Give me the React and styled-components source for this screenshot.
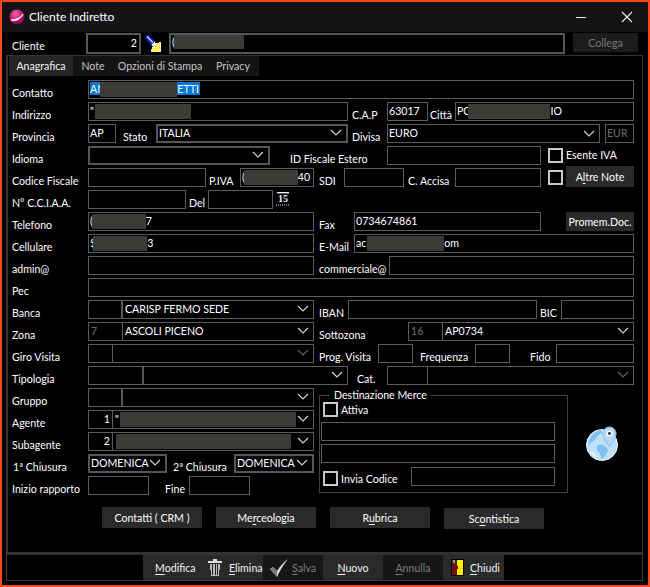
import React from 'react';
import styled, { createGlobalStyle } from 'styled-components';

const Global = createGlobalStyle`
  html, body { margin: 0; padding: 0; background: #000; }
  * { box-sizing: border-box; }
  u { text-underline-offset: 2px; }
`;

const Window = styled.div`
  width: 650px; height: 587px; background: #000; border: 2px solid #ff4a17;
  display: flex; flex-direction: column; overflow: hidden;
  font-family: "Lato", sans-serif; font-size: 10.6px; color: #fff;
`;
const TitleBar = styled.div`
  height: 30px; background: #141414; display: flex; align-items: center; padding: 0 15px 0 7px; flex: none;
`;
const Title = styled.div`font-size: 12px; margin-left: 4px; flex: 1; margin-bottom: 2px;`;
const WinControls = styled.div`display: flex; align-items: center; gap: 34px; margin-bottom: 1px;`;
const ClientBar = styled.div`
  height: 21px; margin-top: 1px; display: flex; flex: none; padding-left: 8px;
`;
const ClientLabel = styled.div`width: 76px; padding: 5px 0 0 2px; line-height: 16px;`;
const Collega = styled.div`
  width: 65px; height: 19px; margin-left: 8px; background: #1c1c1c; color: #7a7a7a;
  display: flex; align-items: center; justify-content: center;
`;
const IconSlot = styled.div`width: 28px; display: flex; padding-left: 3px; align-items: center;`;

const TabFrame = styled.div`
  margin: 1px 5px 0 4px; height: 500px; flex: none; border: 1px solid #333; border-bottom: 3px solid #333;
  border-left-width: 2px;
`;
const Tabs = styled.div`display: flex; height: 20px; margin: 0 0 0 1px;`;
const Tab = styled.div`
  height: 20px; width: ${p => p.$w}px; display: flex; align-items: center; justify-content: center;
  background: ${p => (p.$active ? '#262626' : '#141414')}; color: ${p => (p.$active ? '#f2f2f2' : '#c4c4c4')};
`;
const Form = styled.div`padding: 4px 0 0 4px; display: flex; flex-direction: column;`;
const Row = styled.div`display: flex; height: 19px; margin-bottom: 3px; flex: none;`;
const Label = styled.div`
  width: ${p => p.$w}px; padding-left: ${p => p.$pl || 0}px; padding-top: ${p => (p.$up ? 1 : 5)}px;
  line-height: 16px; white-space: nowrap; flex: none;
`;
const Gap = styled.div`width: ${p => p.$w}px; flex: none;`;
const Field = styled.div`
  width: ${p => p.$w}px; height: ${p => p.$h || 19}px; flex: none; display: flex; align-items: flex-start;
  border: ${p => (p.$thick ? 2 : 1)}px solid ${p => (p.$thick ? '#565656' : '#5c5c5c')};
  padding: ${p => (p.$thick ? 0 : 1)}px 0 0 1px;
  line-height: 14px; white-space: nowrap; overflow: hidden; color: ${p => p.$color || '#fff'};
`;
const NumberField = styled(Field)`justify-content: flex-end; padding-right: 2px; line-height: 16px;`;
const Value = styled.div`flex: 1; min-width: 0; display: flex; overflow: hidden; align-items: flex-start;`;
const Chevron = styled.svg`flex: none; margin: ${p => (p.$thick ? 3 : 4)}px 4px 0 0; width: 12px; height: 8px;`;
const Combo = styled.div`
  width: ${p => p.$w}px; height: 19px; flex: none; display: flex; border: 1px solid #5c5c5c;
  line-height: 14px; white-space: nowrap; overflow: hidden;
`;
const Code = styled.div`
  width: ${p => p.$w}px; flex: none; padding: 1px 2px; text-align: ${p => (p.$right ? 'right' : 'left')};
  border-right: ${p => (p.$thick ? 2 : 1)}px solid ${p => (p.$thick ? '#565656' : '#5c5c5c')};
  color: ${p => (p.$dim ? '#6e6e6e' : '#fff')};
`;
const ComboText = styled.div`flex: 1; min-width: 0; padding: 1px 0 0 2px; display: flex; overflow: hidden;`;
const Check = styled.div`
  width: 15px; height: 15px; flex: none; margin-top: ${p => p.$mt ?? 2}px; border: 2px solid #c8c8c8;
`;
const Redact = styled.span`
  display: block; flex: none; width: ${p => p.$w}px; height: ${p => p.$h || 15}px;
  margin-left: ${p => p.$ml || 0}px; margin-right: ${p => p.$mr || 0}px; background: #3b3b37;
`;
const Selected = styled.span`display: flex; background: #0078d7; color: #fff; height: 13px; overflow: visible; padding-right: 1px;`;
const SideButton = styled.div`
  width: 68px; height: ${p => p.$h || 19}px; margin-top: ${p => p.$mt || 0}px; flex: none; background: #2a2a2a;
  display: flex; align-items: center; justify-content: center; white-space: nowrap;
`;
const Lower = styled.div`display: flex;`;
const LeftCol = styled.div`width: 307px; flex: none; display: flex; flex-direction: column;`;
const Group = styled.fieldset`
  width: 249px; height: 105px; margin: 0; padding: 0 0 0 1px; border: 1px solid #444; flex: none;
  display: flex; flex-direction: column; min-width: 0;
`;
const Legend = styled.legend`margin-left: 9px; padding: 0 4px; line-height: 14px; height: 14px;`;
const GroupRow = styled.div`
  display: flex; margin-top: ${p => p.$mt || 0}px; padding-left: ${p => p.$pl || 0}px; height: ${p => p.$h || 19}px;
`;
const GroupCheckText = styled.span`
  margin-left: 3px; line-height: 16px; padding-top: ${p => p.$pt || 0}px; width: ${p => p.$w || 'auto'}${p => (p.$w ? 'px' : '')};
`;
const GlobeSlot = styled.div`margin: 38px 0 0 17px; flex: none;`;
const ActionRow = styled.div`display: flex; gap: 14px; padding-left: 90px; margin-top: 9px;`;
const Action = styled.div`
  width: 100px; height: 21px; background: #2a2a2a; display: flex; align-items: center; justify-content: center;
  margin-top: ${p => p.$mt || 0}px;
`;
const BottomBar = styled.div`
  margin: 0 5px 0 4px; height: 26px; flex: none; border: 1px solid #3a3a3a; border-top: none;
  display: flex; padding-left: 136px; padding-top: 0;
`;
const BarBtn = styled.div`
  width: ${p => p.$w}px; height: 25px; display: flex; align-items: center; gap: ${p => p.$gap || 0}px;
  justify-content: ${p => (p.$pl ? 'flex-start' : 'center')}; padding-left: ${p => p.$pl || 0}px;
  background: ${p => (p.$off ? '#161616' : '#2a2a2a')}; color: ${p => (p.$off ? '#7c7c7c' : '#f2f2f2')};
`;

const Chev = ({ thick, dim }) => (
  <Chevron $thick={thick} viewBox="0 0 12 8">
    <polyline points="1,1 6,6 11,1" fill="none" stroke={dim ? '#666' : '#d8d8d8'} strokeWidth="1.1" />
  </Chevron>
);

const Select = ({ w, thick, children }) => (
  <Field $w={w} $thick={thick}>
    <Value>{children}</Value>
    <Chev thick={thick} />
  </Field>
);

const Pick = ({ w, code, codeW, right, dimCode, dim, thick, children }) => (
  <Combo $w={w}>
    <Code $w={codeW} $right={right} $dim={dimCode} $thick={thick}>{code}</Code>
    <ComboText>{children}</ComboText>
    <Chev dim={dim} />
  </Combo>
);

const Logo = () => (
  <svg width="16" height="16" viewBox="0 0 16 16">
    <defs>
      <radialGradient id="ball" cx="0.4" cy="0.3" r="0.8">
        <stop offset="0" stopColor="#f06aa8" />
        <stop offset="0.55" stopColor="#c4126e" />
        <stop offset="1" stopColor="#5a0638" />
      </radialGradient>
    </defs>
    <circle cx="8" cy="8" r="7.5" fill="url(#ball)" />
    <path d="M2 11 C6 12.5 11 11 14 5 C12 9 7 10.5 2 11Z" fill="#fff" stroke="#fff" strokeWidth="0.8" />
  </svg>
);

const Minimize = () => (
  <svg width="12" height="12" viewBox="0 0 12 12">
    <line x1="1" y1="6.5" x2="11" y2="6.5" stroke="#eee" strokeWidth="1" />
  </svg>
);
const CloseIcon = () => (
  <svg width="12" height="12" viewBox="0 0 12 12">
    <path d="M1 1 L11 11 M11 1 L1 11" stroke="#eee" strokeWidth="1.1" />
  </svg>
);

const Sweep = () => (
  <svg width="18" height="18" viewBox="0 0 18 18" shapeRendering="crispEdges">
    <defs>
      <pattern id="dith" width="2" height="2" patternUnits="userSpaceOnUse">
        <rect width="2" height="2" fill="#ffef3a" />
        <rect width="1" height="1" fill="#fff" />
      </pattern>
    </defs>
    <path d="M7 17 L8 11 L12 8 L17 7 L17 17Z" fill="url(#dith)" />
    <path d="M1 2 L4 0 L12 8 L8 12Z" fill="#1c2ec0" />
    <path d="M2 2 L4 1 L9 7 L8 8Z" fill="#a9c8ff" />
    <path d="M7 10 L10 7 L12 9 L9 12Z" fill="#efefef" />
  </svg>
);

const CalNum = styled.text`font-family: "Liberation Serif", serif; font-size: 10px; font-weight: bold;`;
const Calendar = () => (
  <svg width="14" height="16" viewBox="0 0 14 16">
    <rect x="1" y="2" width="12" height="1.4" fill="#eee" />
    <CalNum x="2" y="12" fill="#eee">15</CalNum>
    <line x1="0" y1="15" x2="13" y2="15" stroke="#ddd" strokeDasharray="1 1" />
  </svg>
);

const Globe = () => (
  <svg width="34" height="36" viewBox="0 0 34 36">
    <circle cx="17" cy="19" r="15.5" fill="#bfe0fb" stroke="#eaf5ff" strokeWidth="1" />
    <path d="M3 20 C4 10 10 5 16 4 C20 8 12 8 11 12 C9 16 5 16 3 20Z" fill="#7fbff2" />
    <path d="M12 20 C16 17 21 20 23 24 C22 28 19 31 17 33 C15 30 16 26 12 25Z" fill="#7fbff2" />
    <path d="M5 26 C8 24 9 28 12 31 C9 31 6 29 5 26Z" fill="#e6f4ff" />
    <path d="M24.5 1 C20.5 1 18 4.5 18 8 C18 12 22 17 24.5 21 C27 17 31 12 31 8 C31 4.5 28.5 1 24.5 1Z" fill="#b4daf8" stroke="#86bcec" strokeWidth="1" />
    <circle cx="24.5" cy="7.5" r="3" fill="#fff" />
    <circle cx="24.5" cy="7.5" r="1.4" fill="#123" />
  </svg>
);

const Trash = () => (
  <svg width="14" height="17" viewBox="0 0 14 17" shapeRendering="crispEdges">
    <rect x="5" y="0" width="4" height="1.5" fill="#ddd" />
    <rect x="0" y="2" width="14" height="2" fill="#e0e0e0" />
    <path d="M2 5 H12 L11 17 H3Z" fill="#bbb" />
    <path d="M4.5 5 V16 M7 5 V16 M9.5 5 V16" stroke="#222" strokeWidth="1" />
  </svg>
);

const CheckMark = () => (
  <svg width="19" height="18" viewBox="0 0 19 18">
    <path d="M0 10 L3 8 L7 12 C10 7 14 3 18 0 C14 5 10 11 7 18 Z" fill="#d8d8d8" />
    <path d="M3 8 L7 12 L7 18 L0 10Z" fill="#7a7a7a" />
  </svg>
);

const Door = () => (
  <svg width="13" height="17" viewBox="0 0 13 17" shapeRendering="crispEdges">
    <rect width="13" height="17" fill="#000" />
    <rect x="1" y="1" width="5" height="15" fill="#7a0c0c" />
    <rect x="6" y="1" width="6" height="15" fill="#ffee00" />
    <rect x="2" y="1" width="2" height="3" fill="#19c8e0" />
    <rect x="6" y="7" width="1" height="3" fill="#000" />
  </svg>
);

const L = styled(Label).attrs({ $w: 76 })``;

export default function App() {
  return (
    <>
      <Global />
      <Window>
        <TitleBar>
          <Logo />
          <Title>Cliente Indiretto</Title>
          <WinControls>
            <Minimize />
            <CloseIcon />
          </WinControls>
        </TitleBar>
        <ClientBar>
          <ClientLabel>Cliente</ClientLabel>
          <NumberField $w={55} $h={21} $thick>2</NumberField>
          <IconSlot><Sweep /></IconSlot>
          <Field $w={396} $h={21} $thick>
            <Value>(<Redact $w={70} $h={14} $ml={-1} /></Value>
          </Field>
          <Collega>Collega</Collega>
        </ClientBar>
        <TabFrame>
          <Tabs>
            <Tab $active $w={64}>Anagrafica</Tab>
            <Tab $w={40}>Note</Tab>
            <Tab $w={94}>Opzioni di Stampa</Tab>
            <Tab $w={52}>Privacy</Tab>
          </Tabs>
          <Form>
            <Row>
              <L>Contatto</L>
              <Field $w={546}>
                <Selected>AN<Redact $w={77} $ml={-5} />ETTI</Selected>
              </Field>
            </Row>
            <Row>
              <L>Indirizzo</L>
              <Field $w={260}><Value>"<Redact $w={96} $ml={1} /></Value></Field>
              <Label $w={39} $pl={4}>C.A.P</Label>
              <Field $w={41}>63017</Field>
              <Label $w={27} $pl={2}>Città</Label>
              <Field $w={179}><Value>PC<Redact $w={82} $ml={-2} />IO</Value></Field>
            </Row>
            <Row>
              <L>Provincia</L>
              <Field $w={28}>AP</Field>
              <Label $w={40} $pl={7}>Stato</Label>
              <Select w={192} thick>ITALIA</Select>
              <Label $w={39} $pl={4}>Divisa</Label>
              <Select w={213}>EURO</Select>
              <Gap $w={5} />
              <Field $w={29} $color="#6e6e6e">EUR</Field>
            </Row>
            <Row>
              <L>Idioma</L>
              <Select w={182} thick />
              <Label $w={117} $pl={20}>ID Fiscale Estero</Label>
              <Field $w={154} />
              <Gap $w={7} />
              <Check />
              <Label $w={70} $pl={3} $up>Esente IVA</Label>
            </Row>
            <Row>
              <L>Codice Fiscale</L>
              <Field $w={118} />
              <Label $w={34} $pl={3}>P.IVA</Label>
              <Field $w={74}><Value>(<Redact $w={54} $ml={-1} />40</Value></Field>
              <Label $w={30} $pl={5}>SDI</Label>
              <Field $w={60} />
              <Label $w={51} $pl={4}>C. Accisa</Label>
              <Field $w={86} />
              <Gap $w={7} />
              <Check />
              <Gap $w={3} />
              <SideButton $h={21} $mt={-2}><span>A<u>l</u>tre Note</span></SideButton>
            </Row>
            <Row>
              <L>N° C.C.I.A.A.</L>
              <Field $w={98} />
              <Label $w={22} $pl={3}>Del</Label>
              <Field $w={65} />
              <Gap $w={3} />
              <Calendar />
            </Row>
            <Row>
              <L>Telefono</L>
              <Field $w={226}><Value>(<Redact $w={54} $ml={-1} />7</Value></Field>
              <Label $w={40} $pl={5}>Fax</Label>
              <Field $w={187}>0734674861</Field>
              <Gap $w={25} />
              <SideButton>Promem.Doc.</SideButton>
            </Row>
            <Row>
              <L>Cellulare</L>
              <Field $w={226}><Value>$<Redact $w={54} $ml={-3} />3</Value></Field>
              <Label $w={40} $pl={5}>E-Mail</Label>
              <Field $w={280}><Value>ac<Redact $w={77} $ml={1} />om</Value></Field>
            </Row>
            <Row>
              <L>admin@</L>
              <Field $w={226} />
              <Label $w={75} $pl={5}>commerciale@</Label>
              <Field $w={245} />
            </Row>
            <Row>
              <L>Pec</L>
              <Field $w={546} />
            </Row>
            <Row>
              <L>Banca</L>
              <Pick w={226} codeW={34} thick>CARISP FERMO SEDE</Pick>
              <Label $w={34} $pl={5}>IBAN</Label>
              <Field $w={189} />
              <Label $w={24} $pl={3}>BIC</Label>
              <Field $w={73} />
            </Row>
            <Row>
              <L>Zona</L>
              <Pick w={226} codeW={34} code="7" dimCode>ASCOLI PICENO</Pick>
              <Label $w={94} $pl={5}>Sottozona</Label>
              <Pick w={226} codeW={34} code="16" dimCode>AP0734</Pick>
            </Row>
            <Row>
              <L>Giro Visita</L>
              <Pick w={226} codeW={24} dim />
              <Label $w={64} $pl={5}>Prog. Visita</Label>
              <Field $w={35} />
              <Label $w={62} $pl={7}>Frequenza</Label>
              <Field $w={35} />
              <Label $w={46} $pl={20}>Fido</Label>
              <Field $w={78} />
            </Row>
            <Row>
              <L>Tipologia</L>
              <Pick w={260} codeW={55} thick />
              <Label $w={39} $pl={9}>Cat.</Label>
              <Pick w={247} codeW={40} dim />
            </Row>
            <Lower>
              <LeftCol>
                <Row>
                  <L>Gruppo</L>
                  <Pick w={226} codeW={34} thick />
                </Row>
                <Row>
                  <L>Agente</L>
                  <Pick w={226} codeW={24} code="1" right>
                    "<Redact $w={176} $ml={1} />
                  </Pick>
                </Row>
                <Row>
                  <L>Subagente</L>
                  <Pick w={226} codeW={24} code="2" right>
                    <Redact $w={175} $ml={1} />
                  </Pick>
                </Row>
                <Row>
                  <Label $w={76} $pl={1}>1ª Chiusura</Label>
                  <Select w={79} thick>DOMENICA</Select>
                  <Label $w={67} $pl={6}>2ª Chiusura</Label>
                  <Select w={80} thick>DOMENICA</Select>
                </Row>
                <Row>
                  <L>Inizio rapporto</L>
                  <Field $w={61} />
                  <Label $w={40} $pl={16}>Fine</Label>
                  <Field $w={61} />
                </Row>
              </LeftCol>
              <Group>
                <Legend>Destinazione Merce</Legend>
                <GroupRow $pl={2} $h={17}>
                  <Check $mt={0} />
                  <GroupCheckText>Attiva</GroupCheckText>
                </GroupRow>
                <GroupRow $mt={3}><Field $w={234} /></GroupRow>
                <GroupRow $mt={3}><Field $w={234} /></GroupRow>
                <GroupRow $mt={4} $pl={2}>
                  <Check $mt={4} />
                  <GroupCheckText $pt={4} $w={70}>Invia Codice</GroupCheckText>
                  <Field $w={144} />
                </GroupRow>
              </Group>
              <GlobeSlot><Globe /></GlobeSlot>
            </Lower>
            <ActionRow>
              <Action>Contatti ( CRM )</Action>
              <Action><span>Me<u>r</u>ceologia</span></Action>
              <Action><span>R<u>u</u>brica</span></Action>
              <Action $mt={1}><span>Sc<u>o</u>ntistica</span></Action>
            </ActionRow>
          </Form>
        </TabFrame>
        <BottomBar>
          <BarBtn $w={57} $pl={12}><span><u>M</u>odifica</span></BarBtn>
          <BarBtn $w={63} $pl={8} $gap={7}><Trash /><span><u>E</u>limina</span></BarBtn>
          <BarBtn $w={60} $off $pl={7} $gap={3}><CheckMark /><span><u>S</u>alva</span></BarBtn>
          <BarBtn $w={60}><span><u>N</u>uovo</span></BarBtn>
          <BarBtn $w={60} $off><span><u>A</u>nnulla</span></BarBtn>
          <BarBtn $w={61} $pl={8} $gap={6}><Door /><span><u>C</u>hiudi</span></BarBtn>
        </BottomBar>
      </Window>
    </>
  );
}
